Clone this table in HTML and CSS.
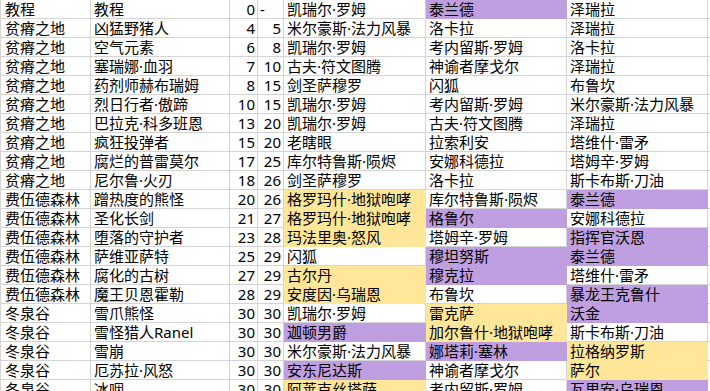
FILE: index.html
```html
<!DOCTYPE html>
<html lang="zh">
<head>
<meta charset="utf-8">
<link rel="stylesheet" href="styles.css">
</head>
<body>
<div class="sheet">
  <div class="c a">教程</div><div class="c">教程</div><div class="c n">0</div><div class="c dash">-</div><div class="c">凯瑞尔·罗姆</div><div class="c p">泰兰德</div><div class="c">泽瑞拉</div><div class="c x"></div>
  <div class="c a">贫瘠之地</div><div class="c">凶猛野猪人</div><div class="c n">4</div><div class="c n">5</div><div class="c">米尔豪斯·法力风暴</div><div class="c">洛卡拉</div><div class="c">泽瑞拉</div><div class="c x"></div>
  <div class="c a">贫瘠之地</div><div class="c">空气元素</div><div class="c n">6</div><div class="c n">8</div><div class="c">凯瑞尔·罗姆</div><div class="c">考内留斯·罗姆</div><div class="c">洛卡拉</div><div class="c x"></div>
  <div class="c a">贫瘠之地</div><div class="c">塞瑞娜·血羽</div><div class="c n">7</div><div class="c n">10</div><div class="c">古夫·符文图腾</div><div class="c">神谕者摩戈尔</div><div class="c">泽瑞拉</div><div class="c x"></div>
  <div class="c a">贫瘠之地</div><div class="c">药剂师赫布瑞姆</div><div class="c n">8</div><div class="c n">15</div><div class="c">剑圣萨穆罗</div><div class="c">闪狐</div><div class="c">布鲁坎</div><div class="c x"></div>
  <div class="c a">贫瘠之地</div><div class="c">烈日行者·傲蹄</div><div class="c n">10</div><div class="c n">15</div><div class="c">凯瑞尔·罗姆</div><div class="c">考内留斯·罗姆</div><div class="c">米尔豪斯·法力风暴</div><div class="c x"></div>
  <div class="c a">贫瘠之地</div><div class="c">巴拉克·科多班恩</div><div class="c n">13</div><div class="c n">20</div><div class="c">凯瑞尔·罗姆</div><div class="c">古夫·符文图腾</div><div class="c">泽瑞拉</div><div class="c x"></div>
  <div class="c a">贫瘠之地</div><div class="c">疯狂投弹者</div><div class="c n">15</div><div class="c n">20</div><div class="c">老瞎眼</div><div class="c">拉索利安</div><div class="c">塔维什·雷矛</div><div class="c x"></div>
  <div class="c a">贫瘠之地</div><div class="c">腐烂的普雷莫尔</div><div class="c n">17</div><div class="c n">25</div><div class="c">库尔特鲁斯·陨烬</div><div class="c">安娜科德拉</div><div class="c">塔姆辛·罗姆</div><div class="c x"></div>
  <div class="c a">贫瘠之地</div><div class="c">尼尔鲁·火刃</div><div class="c n">18</div><div class="c n">26</div><div class="c">剑圣萨穆罗</div><div class="c">洛卡拉</div><div class="c">斯卡布斯·刀油</div><div class="c x"></div>
  <div class="c a">费伍德森林</div><div class="c">蹭热度的熊怪</div><div class="c n">20</div><div class="c n">26</div><div class="c y">格罗玛什·地狱咆哮</div><div class="c">库尔特鲁斯·陨烬</div><div class="c p">泰兰德</div><div class="c x"></div>
  <div class="c a">费伍德森林</div><div class="c">圣化长剑</div><div class="c n">21</div><div class="c n">27</div><div class="c y">格罗玛什·地狱咆哮</div><div class="c p">格鲁尔</div><div class="c">安娜科德拉</div><div class="c x"></div>
  <div class="c a">费伍德森林</div><div class="c">堕落的守护者</div><div class="c n">23</div><div class="c n">28</div><div class="c y">玛法里奥·怒风</div><div class="c">塔姆辛·罗姆</div><div class="c p">指挥官沃恩</div><div class="c x"></div>
  <div class="c a">费伍德森林</div><div class="c">萨维亚萨特</div><div class="c n">25</div><div class="c n">29</div><div class="c">闪狐</div><div class="c p">穆坦努斯</div><div class="c p">泰兰德</div><div class="c x"></div>
  <div class="c a">费伍德森林</div><div class="c">腐化的古树</div><div class="c n">27</div><div class="c n">29</div><div class="c y">古尔丹</div><div class="c p">穆克拉</div><div class="c">塔维什·雷矛</div><div class="c x"></div>
  <div class="c a">费伍德森林</div><div class="c">魔王贝恩霍勒</div><div class="c n">28</div><div class="c n">29</div><div class="c y">安度因·乌瑞恩</div><div class="c">布鲁坎</div><div class="c p">暴龙王克鲁什</div><div class="c x"></div>
  <div class="c a">冬泉谷</div><div class="c">雪爪熊怪</div><div class="c n">30</div><div class="c n">30</div><div class="c">凯瑞尔·罗姆</div><div class="c y">雷克萨</div><div class="c p">沃金</div><div class="c x"></div>
  <div class="c a">冬泉谷</div><div class="c">雪怪猎人Ranel</div><div class="c n">30</div><div class="c n">30</div><div class="c p">迦顿男爵</div><div class="c y">加尔鲁什·地狱咆哮</div><div class="c">斯卡布斯·刀油</div><div class="c x"></div>
  <div class="c a">冬泉谷</div><div class="c">雪崩</div><div class="c n">30</div><div class="c n">30</div><div class="c">米尔豪斯·法力风暴</div><div class="c p">娜塔莉·塞林</div><div class="c y">拉格纳罗斯</div><div class="c x"></div>
  <div class="c a">冬泉谷</div><div class="c">厄苏拉·风怒</div><div class="c n">30</div><div class="c n">30</div><div class="c p">安东尼达斯</div><div class="c">神谕者摩戈尔</div><div class="c y">萨尔</div><div class="c x"></div>
  <div class="c a">冬泉谷</div><div class="c">冰咽</div><div class="c n">30</div><div class="c n">30</div><div class="c y">阿莱克丝塔萨</div><div class="c">考内留斯·罗姆</div><div class="c p">瓦里安·乌瑞恩</div><div class="c x"></div>
</div>
</body>
</html>
```
FILE: styles.css
```css
html, body {
  margin: 0;
  padding: 0;
  background: #ffffff;
  overflow: hidden;
}

.sheet {
  display: grid;
  grid-template-columns: 91px 139px 28px 26px 142px 141px 141px 1fr;
  grid-auto-rows: 19px;
  font-family: "Noto Sans", "Noto Sans CJK SC", sans-serif;
  font-size: 15px;
  color: #000000;
}

.c {
  box-sizing: border-box;
  border-right: 1px solid #d4d4d4;
  border-bottom: 1px solid #d4d4d4;
  padding: 0 2px 0 3px;
  line-height: 18px;
  white-space: nowrap;
}

.a {
  border-left: 1px solid #d4d4d4;
  padding-left: 4px;
}

.n {
  text-align: right;
  padding-right: 2px;
}

.dash {
  padding-left: 2px;
}

.y {
  background: #ffe699;
  border-color: #ffe699;
}

.p {
  background: #c09fe0;
  border-color: #c09fe0;
}

.x {
  border-right: none;
}
```
